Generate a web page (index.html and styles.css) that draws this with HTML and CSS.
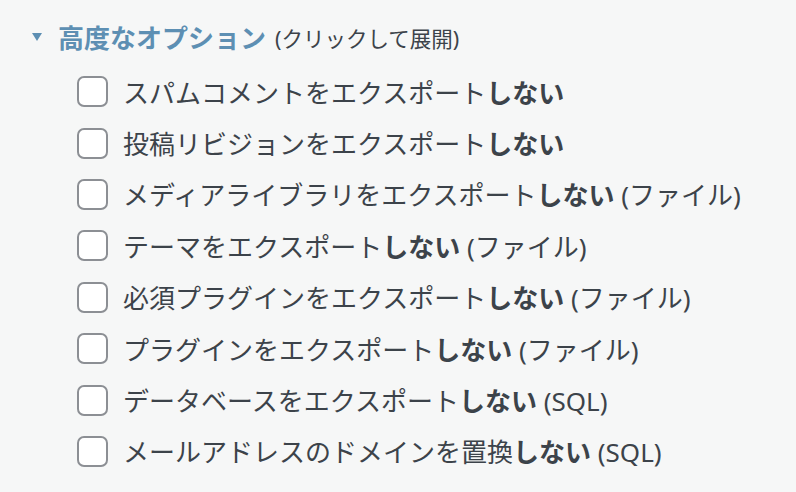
FILE: index.html
```html
<!DOCTYPE html>
<html lang="ja">
<head>
    <meta charset="UTF-8">
    <title>高度なオプション</title>
    <link rel="stylesheet" href="styles.css">
</head>
<body>
    <div class="advanced">
        <div class="advanced-toggle">
            <span class="arrow"></span>
            <span class="toggle-title">高度なオプション</span>
            <span class="toggle-hint">(クリックして展開)</span>
        </div>
        <ul class="option-list">
            <li><label><input type="checkbox"><span>スパムコメントをエクスポート<b>しない</b></span></label></li>
            <li><label><input type="checkbox"><span>投稿リビジョンをエクスポート<b>しない</b></span></label></li>
            <li><label><input type="checkbox"><span>メディアライブラリをエクスポート<b>しない</b> (ファイル)</span></label></li>
            <li><label><input type="checkbox"><span>テーマをエクスポート<b>しない</b> (ファイル)</span></label></li>
            <li><label><input type="checkbox"><span>必須プラグインをエクスポート<b>しない</b> (ファイル)</span></label></li>
            <li><label><input type="checkbox"><span>プラグインをエクスポート<b>しない</b> (ファイル)</span></label></li>
            <li><label><input type="checkbox"><span>データベースをエクスポート<b>しない</b> (SQL)</span></label></li>
            <li><label><input type="checkbox"><span>メールアドレスのドメインを置換<b>しない</b> (SQL)</span></label></li>
        </ul>
    </div>
</body>
</html>
```

FILE: styles.css
```css
body {
    margin: 0;
    background-color: #f6f7f7;
    font-family: "Noto Sans", "Noto Sans CJK JP", sans-serif;
    color: #3c434a;
}
.advanced {
    padding: 20px 0 0 32px;
}
.advanced-toggle {
    display: flex;
    align-items: center;
    height: 34px;
}
.arrow {
    width: 0;
    height: 0;
    border-left: 5px solid transparent;
    border-right: 5px solid transparent;
    border-top: 8px solid #5d8fb3;
    margin-right: 16px;
}
.toggle-title {
    font-size: 26px;
    font-weight: 700;
    color: #5d8fb3;
    margin-right: 9px;
}
.toggle-hint {
    font-size: 21.5px;
}
.option-list {
    list-style: none;
    margin: 12px 0 0;
    padding: 0 0 0 45px;
}
.option-list li {
    height: 51.4px;
    display: flex;
    align-items: center;
}
.option-list label {
    display: flex;
    align-items: center;
    font-size: 26px;
}
.option-list b {
    font-weight: 700;
}
input[type="checkbox"] {
    appearance: none;
    -webkit-appearance: none;
    width: 31px;
    height: 31px;
    margin: 0 15px 0 0;
    box-sizing: border-box;
    border: 2px solid #8c8f94;
    border-radius: 7px;
    background-color: #fff;
}
```
